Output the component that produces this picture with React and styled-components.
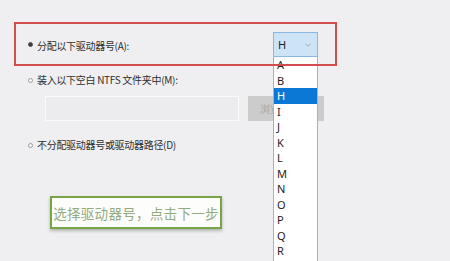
import styled, { createGlobalStyle } from 'styled-components';

const Global = createGlobalStyle`
  html, body { margin: 0; padding: 0; background: #efeff1; }
  body { font-family: "Noto Sans CJK SC", "Noto Sans", sans-serif; }
`;

const Page = styled.div`
  position: relative;
  width: 450px;
  height: 261px;
  overflow: hidden;
  background: #efeff1;
  padding: 32px 0 0 28px;
  box-sizing: border-box;
  display: flex;
  flex-direction: column;
`;

const OptionRow = styled.div`
  display: flex;
  align-items: center;
  height: ${p => p.$h || 12}px;
  margin-top: ${p => p.$mt || 0}px;
`;

const Radio = styled.span`
  width: 5px;
  height: 5px;
  border-radius: 50%;
  box-sizing: border-box;
  border: 1px solid ${p => (p.$on ? '#555' : '#9a9a9a')};
  background: ${p => (p.$on ? '#3a3a3a' : '#fff')};
  margin-right: 4px;
  flex: none;
`;

const Label = styled.span`
  font-size: 10px;
  line-height: 12px;
  color: #2e2e2e;
  letter-spacing: -0.3px;
  white-space: nowrap;
  padding-top: ${p => p.$pt || 0}px;
`;

const SelectWrap = styled.div`
  position: relative;
  margin-left: auto;
  margin-right: 132px;
  width: 45px;
  height: 25px;
`;

const SelectHead = styled.div`
  box-sizing: border-box;
  height: 25px;
  background: #cde3f6;
  border: 1px solid #88b7e3;
  display: flex;
  align-items: center;
  justify-content: space-between;
  padding: 0 6px 0 4px;
  font-family: "Noto Sans", sans-serif;
  font-size: 11px;
  color: #1e1e1e;
`;

const List = styled.ul`
  position: absolute;
  top: 25px;
  left: 0;
  width: 45px;
  margin: 0;
  padding: 0 0 12px;
  list-style: none;
  box-sizing: border-box;
  background: #fff;
  border: 1px solid #9fb4c8;
  border-top: none;
  z-index: 2;
`;

const Item = styled.li`
  height: 15.5px;
  display: flex;
  align-items: center;
  padding-left: 3px;
  font-family: "Noto Sans", sans-serif;
  font-size: 11px;
  line-height: 1;
  color: ${p => (p.$sel ? '#fff' : '#222')};
  background: ${p => (p.$sel ? '#0a78d4' : 'transparent')};
`;

const PathRow = styled.div`
  display: flex;
  align-items: center;
  gap: 9px;
  margin: 10px 0 0 17px;
  height: 25px;
`;

const PathInput = styled.div`
  width: 194px;
  height: 25px;
  box-sizing: border-box;
  border: 1px solid #fafafa;
  background: #ececee;
`;

const Browse = styled.div`
  width: 76px;
  height: 25px;
  background: #cccccc;
  color: #a5a5a5;
  font-size: 10px;
  display: flex;
  align-items: center;
  padding-left: 12px;
  box-sizing: border-box;
`;

const Callout = styled.div`
  margin: 45px 0 0 22px;
  width: 172px;
  height: 33px;
  box-sizing: border-box;
  border: 2px solid #77a446;
  background: #fdfdfb;
  box-shadow: 0 2px 3px rgba(60, 70, 50, 0.35);
  display: flex;
  align-items: center;
  justify-content: center;
  font-size: 13.5px;
  color: #93ab7f;
  letter-spacing: 0.3px;
`;

const Annotation = styled.div`
  position: absolute;
  left: 14px;
  top: 22px;
  width: 323px;
  height: 44px;
  box-sizing: border-box;
  border: 2px solid #d24e4e;
  z-index: 3;
  pointer-events: none;
`;

const letters = ['A', 'B', 'H', 'I', 'J', 'K', 'L', 'M', 'N', 'O', 'P', 'Q', 'R'];

export default function App() {
  return (
    <>
      <Global />
      <Page>
        <OptionRow $h={25}>
          <Radio $on />
          <Label $pt={3}>分配以下驱动器号(A):</Label>
          <SelectWrap>
            <SelectHead>
              H
              <svg width="6" height="4" viewBox="0 0 6 4">
                <path d="M0.5 0.8 L3 3.2 L5.5 0.8" fill="none" stroke="#9aa4ae" strokeWidth="0.9" />
              </svg>
            </SelectHead>
            <List>
              {letters.map(l => (
                <Item key={l} $sel={l === 'H'}>{l}</Item>
              ))}
            </List>
          </SelectWrap>
        </OptionRow>
        <OptionRow $mt={17}>
          <Radio />
          <Label>装入以下空白 NTFS 文件夹中(M):</Label>
        </OptionRow>
        <PathRow>
          <PathInput />
          <Browse>浏览(R)...</Browse>
        </PathRow>
        <OptionRow $mt={18}>
          <Radio />
          <Label>不分配驱动器号或驱动器路径(D)</Label>
        </OptionRow>
        <Callout>选择驱动器号，点击下一步</Callout>
        <Annotation />
      </Page>
    </>
  );
}
